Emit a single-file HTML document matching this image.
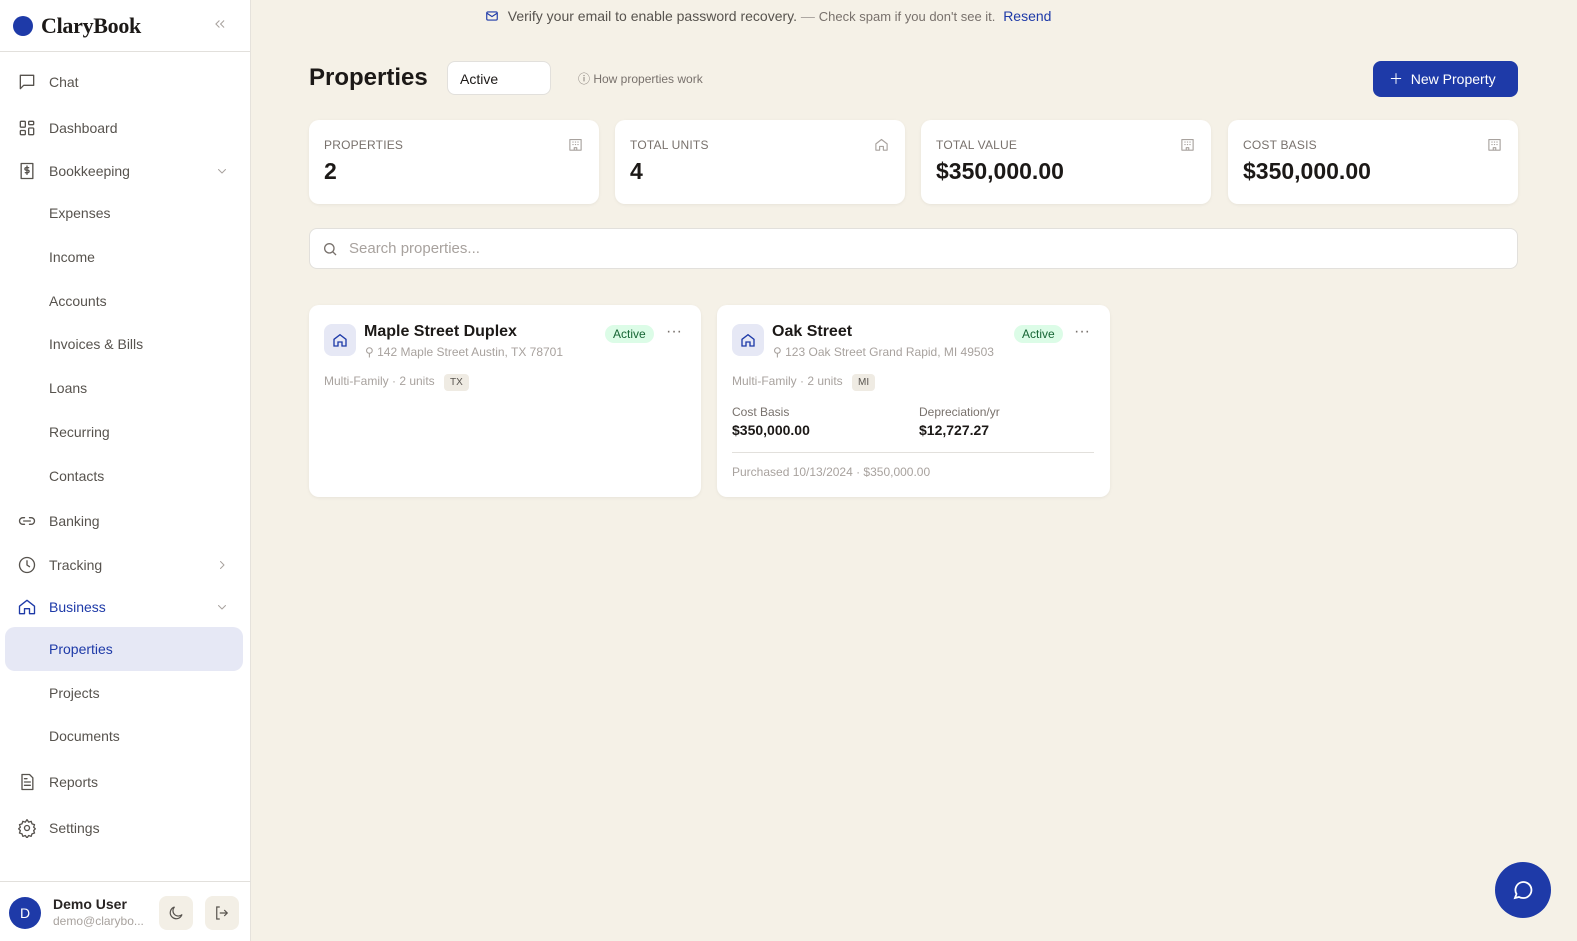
<!DOCTYPE html>
<html><head><meta charset="utf-8"><style>
*{box-sizing:border-box;margin:0;padding:0}
body{width:1577px;height:941px;overflow:hidden;font-family:"Liberation Sans",sans-serif;background:#f5f1e7;color:#1c1917;position:relative}
.sb{position:absolute;left:0;top:0;width:251px;height:941px;background:#fff;border-right:1px solid #e5e2dc}
.logo{height:52px;border-bottom:1px solid #e2e0dc;display:flex;align-items:center;padding-left:13px}
.dot{width:20px;height:20px;border-radius:50%;background:#1e3aa8;margin-right:8px}
.logo b{font-family:"Liberation Serif",serif;font-size:22px;letter-spacing:-.3px}
.ni{position:absolute;left:0;width:251px;font-size:14px;color:#57534e;height:20px}
.ni span{position:absolute;left:49px;top:2px}
.ic{position:absolute;left:17px;top:0;width:20px;height:20px;fill:none;stroke:#57534e;stroke-width:1.6;stroke-linecap:round;stroke-linejoin:round}
.ch{position:absolute;left:216px;top:4px;width:12px;height:12px;fill:none;stroke:#a8a29e;stroke-width:2;stroke-linecap:round;stroke-linejoin:round}
.main{position:absolute;left:251px;top:0;right:0;height:941px}
.card{position:absolute;background:#fff;border-radius:10px;box-shadow:0 1px 3px rgba(0,0,0,.06)}
.lab{position:absolute;left:15px;top:18px;font-size:12px;color:#78716c;letter-spacing:.2px}
.val{position:absolute;left:15px;top:38px;font-size:23px;font-weight:bold}
.si{position:absolute;right:16px;top:17px;width:15px;height:15px;fill:none;stroke:#a8a29e;stroke-width:1.8;stroke-linejoin:round}
.badge{position:absolute;background:#dcfce7;color:#166534;font-size:12px;border-radius:10px;padding:2px 8px}
.small{font-size:12px;color:#a8a29e}
</style></head><body>
<div class="sb">
<div class="logo"><div class="dot"></div><b>ClaryBook</b><svg style="position:absolute;left:213px;top:17px;width:14px;height:14px;fill:none;stroke:#a8a29e;stroke-width:1.8" viewBox="0 0 24 24"><path d="M11 6l-6 6 6 6M19 6l-6 6 6 6"/></svg></div>
<div class="ni" style="top:72px"><svg class="ic" viewBox="0 0 24 24"><path d="M4 4h16v12H8l-4 4z"/></svg><span>Chat</span></div>
<div class="ni" style="top:118px"><svg class="ic" viewBox="0 0 24 24"><rect x="4" y="4" width="6" height="7" rx="1"/><rect x="14" y="4" width="6" height="4" rx="1"/><rect x="14" y="12" width="6" height="8" rx="1"/><rect x="4" y="15" width="6" height="5" rx="1"/></svg><span>Dashboard</span></div>
<div class="ni" style="top:161px"><svg class="ic" viewBox="0 0 24 24"><rect x="5" y="3" width="14" height="18"/><path d="M14 8h-3a1.5 1.5 0 000 3h2a1.5 1.5 0 010 3h-3M12 6v10"/></svg><span>Bookkeeping</span><svg class="ch" viewBox="0 0 24 24"><path d="M5 9l7 7 7-7"/></svg></div>
<div class="ni" style="top:203px"><span>Expenses</span></div>
<div class="ni" style="top:247px"><span>Income</span></div>
<div class="ni" style="top:291px"><span>Accounts</span></div>
<div class="ni" style="top:334px"><span>Invoices &amp; Bills</span></div>
<div class="ni" style="top:378px"><span>Loans</span></div>
<div class="ni" style="top:422px"><span>Recurring</span></div>
<div class="ni" style="top:466px"><span>Contacts</span></div>
<div class="ni" style="top:511px"><svg class="ic" viewBox="0 0 24 24"><path d="M9 8H7a4 4 0 000 8h2M15 8h2a4 4 0 010 8h-2M8 12h8"/></svg><span>Banking</span></div>
<div class="ni" style="top:555px"><svg class="ic" viewBox="0 0 24 24"><circle cx="12" cy="12" r="9"/><path d="M12 7v5l3 2"/></svg><span>Tracking</span><svg class="ch" viewBox="0 0 24 24"><path d="M9 5l7 7-7 7"/></svg></div>
<div class="ni" style="top:597px;color:#1e3aa8"><svg class="ic" viewBox="0 0 24 24" style="stroke:#1e3aa8"><path d="M3 11l9-7 9 7v9h-6v-6h-6v6H3z"/></svg><span>Business</span><svg class="ch" viewBox="0 0 24 24"><path d="M5 9l7 7 7-7"/></svg></div>
<div style="position:absolute;left:5px;top:627px;width:238px;height:44px;background:#e6e8f5;border-radius:10px"></div>
<div class="ni" style="top:639px;color:#1e3aa8"><span>Properties</span></div>
<div class="ni" style="top:683px"><span>Projects</span></div>
<div class="ni" style="top:726px"><span>Documents</span></div>
<div class="ni" style="top:772px"><svg class="ic" viewBox="0 0 24 24"><path d="M6 3h9l4 4v14H6zM9 12h7M9 16h7M9 8h3"/></svg><span>Reports</span></div>
<div class="ni" style="top:818px"><svg class="ic" viewBox="0 0 24 24"><circle cx="12" cy="12" r="3"/><path d="M12 2l2 3 3-1 1 3 3 1-1 3 2 2-2 2 1 3-3 1-1 3-3-1-2 3-2-3-3 1-1-3-3-1 1-3-2-2 2-2-1-3 3-1 1-3 3 1z"/></svg><span>Settings</span></div>
<div style="position:absolute;left:0;top:881px;width:251px;border-top:1px solid #e2e0dc;height:60px">
<div style="position:absolute;left:9px;top:15px;width:32px;height:32px;border-radius:50%;background:#1e3aa8;color:#fff;font-size:14px;text-align:center;line-height:32px">D</div>
<div style="position:absolute;left:53px;top:14px;font-size:14px;font-weight:bold;color:#292524">Demo User</div>
<div style="position:absolute;left:53px;top:32px;font-size:12px;color:#a8a29e">demo@clarybo...</div>
<div style="position:absolute;left:159px;top:14px;width:34px;height:34px;border-radius:8px;background:#f3efe6"><svg viewBox="0 0 24 24" style="position:absolute;left:8px;top:8px;width:18px;height:18px;fill:none;stroke:#57534e;stroke-width:1.6"><path d="M20 14A8 8 0 1110 4a6 6 0 0010 10z"/></svg></div>
<div style="position:absolute;left:205px;top:14px;width:34px;height:34px;border-radius:8px;background:#f3efe6"><svg viewBox="0 0 24 24" style="position:absolute;left:8px;top:8px;width:18px;height:18px;fill:none;stroke:#57534e;stroke-width:1.6"><path d="M9 4H5v16h4M15 8l4 4-4 4M19 12H9"/></svg></div>
</div>
</div>
<div class="main">
<div style="position:absolute;left:233px;top:8px;font-size:14px;color:#57534e;white-space:nowrap"><svg viewBox="0 0 24 24" style="width:16px;height:14px;vertical-align:-2px;fill:none;stroke:#1e3aa8;stroke-width:2"><rect x="3" y="5" width="18" height="14" rx="2"/><path d="M3 7l9 6 9-6"/></svg>&nbsp; Verify your email to enable password recovery. <span style="color:#a8a29e">—</span> <span style="font-size:13px;color:#78716c">Check spam if you don't see it.</span>&nbsp; <span style="color:#1e3aa8">Resend</span></div>
<div style="position:absolute;left:58px;top:64px;font-size:24px;font-weight:bold">Properties</div>
<div style="position:absolute;left:196px;top:61px;width:104px;height:34px;border:1px solid #e2e0dc;border-radius:8px;background:#fff;font-size:14px;padding:9px 12px">Active</div>
<div style="position:absolute;left:327px;top:70px;font-size:12px;color:#78716c">ⓘ How properties work</div>
<div style="position:absolute;left:1122px;top:61px;width:145px;height:36px;border-radius:8px;background:#1e3aa8;color:#fff;font-size:14px;line-height:36px;padding-left:16px">＋&nbsp; New Property</div>
<div class="card" style="left:58px;top:120px;width:290px;height:84px"><div class="lab">PROPERTIES</div><div class="val">2</div><svg class="si" viewBox="0 0 24 24"><rect x="3" y="4" width="18" height="17"/><path d="M7 8h2M11 8h2M15 8h2M7 12h2M11 12h2M15 12h2M10 21v-4h4v4"/></svg></div>
<div class="card" style="left:364px;top:120px;width:290px;height:84px"><div class="lab">TOTAL UNITS</div><div class="val">4</div><svg class="si" viewBox="0 0 24 24"><path d="M3 11l9-7 9 7v10h-6v-6h-6v6H3z"/></svg></div>
<div class="card" style="left:670px;top:120px;width:290px;height:84px"><div class="lab">TOTAL VALUE</div><div class="val">$350,000.00</div><svg class="si" viewBox="0 0 24 24"><rect x="3" y="4" width="18" height="17"/><path d="M7 8h2M11 8h2M15 8h2M7 12h2M11 12h2M15 12h2M10 21v-4h4v4"/></svg></div>
<div class="card" style="left:977px;top:120px;width:290px;height:84px"><div class="lab">COST BASIS</div><div class="val">$350,000.00</div><svg class="si" viewBox="0 0 24 24"><rect x="3" y="4" width="18" height="17"/><path d="M7 8h2M11 8h2M15 8h2M7 12h2M11 12h2M15 12h2M10 21v-4h4v4"/></svg></div>
<div style="position:absolute;left:58px;top:228px;width:1209px;height:41px;border:1px solid #e2e0dc;border-radius:8px;background:#fff;font-size:15px;color:#a8a29e;padding:11px 0 0 39px">Search properties...<svg viewBox="0 0 24 24" style="position:absolute;left:12px;top:12px;width:16px;height:16px;fill:none;stroke:#78716c;stroke-width:2"><circle cx="11" cy="11" r="7"/><path d="M16 16l5 5"/></svg></div>
<div class="card" style="left:58px;top:305px;width:392px;height:192px">
<div style="position:absolute;left:15px;top:19px;width:32px;height:32px;border-radius:8px;background:#e6e8f5"><svg viewBox="0 0 24 24" style="position:absolute;left:8px;top:8px;width:16px;height:16px;fill:none;stroke:#1e3aa8;stroke-width:2"><path d="M3 11l9-7 9 7v10h-6v-6h-6v6H3z"/></svg></div>
<div style="position:absolute;left:55px;top:18px;font-size:16px;font-weight:bold">Maple Street Duplex</div>
<div class="small" style="position:absolute;left:56px;top:40px">⚲ 142 Maple Street Austin, TX 78701</div>
<div class="badge" style="left:296px;top:20px">Active</div>
<div style="position:absolute;left:357px;top:18px;color:#78716c">···</div>
<div class="small" style="position:absolute;left:15px;top:69px">Multi-Family · 2 units <span style="background:#efebe3;color:#57534e;font-size:10px;padding:3px 6px;border-radius:4px;margin-left:6px">TX</span></div>
</div>
<div class="card" style="left:466px;top:305px;width:393px;height:192px">
<div style="position:absolute;left:15px;top:19px;width:32px;height:32px;border-radius:8px;background:#e6e8f5"><svg viewBox="0 0 24 24" style="position:absolute;left:8px;top:8px;width:16px;height:16px;fill:none;stroke:#1e3aa8;stroke-width:2"><path d="M3 11l9-7 9 7v10h-6v-6h-6v6H3z"/></svg></div>
<div style="position:absolute;left:55px;top:18px;font-size:16px;font-weight:bold">Oak Street</div>
<div class="small" style="position:absolute;left:56px;top:40px">⚲ 123 Oak Street Grand Rapid, MI 49503</div>
<div class="badge" style="left:297px;top:20px">Active</div>
<div style="position:absolute;left:357px;top:18px;color:#78716c">···</div>
<div class="small" style="position:absolute;left:15px;top:69px">Multi-Family · 2 units <span style="background:#efebe3;color:#57534e;font-size:10px;padding:3px 6px;border-radius:4px;margin-left:6px">MI</span></div>
<div style="position:absolute;left:15px;top:100px;font-size:12px;color:#78716c">Cost Basis</div>
<div style="position:absolute;left:15px;top:117px;font-size:14px;font-weight:bold">$350,000.00</div>
<div style="position:absolute;left:202px;top:100px;font-size:12px;color:#78716c">Depreciation/yr</div>
<div style="position:absolute;left:202px;top:117px;font-size:14px;font-weight:bold">$12,727.27</div>
<div style="position:absolute;left:15px;top:147px;width:362px;border-top:1px solid #e2e0dc"></div>
<div class="small" style="position:absolute;left:15px;top:160px">Purchased 10/13/2024 · $350,000.00</div>
</div>
<div style="position:absolute;left:1244px;top:862px;width:56px;height:56px;border-radius:50%;background:#1e3aa8"><svg viewBox="0 0 24 24" style="position:absolute;left:16px;top:16px;width:24px;height:24px;fill:none;stroke:#fff;stroke-width:1.8"><path d="M4 20l1.5-4A8 8 0 1112 20a8 8 0 01-4-1z"/></svg></div>
</div>
</body></html>
